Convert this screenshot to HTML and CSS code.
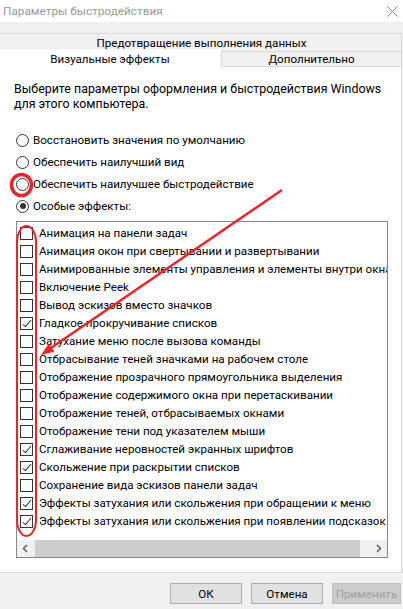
FILE: index.html
```html
<!DOCTYPE html>
<html lang="ru">
<head>
    <meta charset="UTF-8">
    <meta name="viewport" content="width=device-width, initial-scale=1.0">
    <title>Параметры быстродействия</title>
    <link rel="stylesheet" href="styles.css">
</head>
<body>
    <div class="window">
        <div class="titlebar">
            <span class="title">Параметры быстродействия</span>
            <svg class="close" width="11" height="11" viewBox="0 0 11 11">
                <path d="M0.5 0.5 L10.5 10.5 M10.5 0.5 L0.5 10.5" stroke="#8a8a8a" stroke-width="1" fill="none"/>
            </svg>
        </div>
        <div class="tabs">
            <div class="tab-back">Предотвращение выполнения данных</div>
            <div class="tab-front">
                <div class="tab active">Визуальные эффекты</div>
                <div class="tab">Дополнительно</div>
            </div>
        </div>
        <div class="panel">
            <p class="desc">Выберите параметры оформления и быстродействия Windows для этого компьютера.</p>
            <div class="radios">
                <label class="radio"><span class="dot"></span>Восстановить значения по умолчанию</label>
                <label class="radio"><span class="dot"></span>Обеспечить наилучший вид</label>
                <label class="radio"><span class="dot"></span>Обеспечить наилучшее быстродействие</label>
                <label class="radio checked"><span class="dot"></span>Особые эффекты:</label>
            </div>
            <div class="listbox">
                <ul class="effects">
                    <li><span class="box"></span>Анимация на панели задач</li>
                    <li><span class="box"></span>Анимация окон при свертывании и развертывании</li>
                    <li><span class="box"></span>Анимированные элементы управления и элементы внутри окна</li>
                    <li><span class="box"></span>Включение Peek</li>
                    <li><span class="box"></span>Вывод эскизов вместо значков</li>
                    <li class="on"><span class="box"></span>Гладкое прокручивание списков</li>
                    <li><span class="box"></span>Затухание меню после вызова команды</li>
                    <li><span class="box"></span>Отбрасывание теней значками на рабочем столе</li>
                    <li><span class="box"></span>Отображение прозрачного прямоугольника выделения</li>
                    <li><span class="box"></span>Отображение содержимого окна при перетаскивании</li>
                    <li><span class="box"></span>Отображение теней, отбрасываемых окнами</li>
                    <li><span class="box"></span>Отображение тени под указателем мыши</li>
                    <li class="on"><span class="box"></span>Сглаживание неровностей экранных шрифтов</li>
                    <li class="on"><span class="box"></span>Скольжение при раскрытии списков</li>
                    <li><span class="box"></span>Сохранение вида эскизов панели задач</li>
                    <li class="on"><span class="box"></span>Эффекты затухания или скольжения при обращении к меню</li>
                    <li class="on"><span class="box"></span>Эффекты затухания или скольжения при появлении подсказок</li>
                </ul>
                <div class="hscroll">
                    <span class="arrow">
                        <svg width="7" height="9" viewBox="0 0 7 9"><path d="M5 1 L1.5 4.5 L5 8" stroke="#606060" stroke-width="1.5" fill="none"/></svg>
                    </span>
                    <span class="thumb"></span>
                    <span class="arrow">
                        <svg width="7" height="9" viewBox="0 0 7 9"><path d="M2 1 L5.5 4.5 L2 8" stroke="#606060" stroke-width="1.5" fill="none"/></svg>
                    </span>
                </div>
            </div>
        </div>
        <div class="buttons">
            <button>ОК</button>
            <button>Отмена</button>
            <button disabled>Применить</button>
        </div>

        <!-- red marks drawn over the screenshot -->
        <svg class="marks" width="403" height="609" viewBox="0 0 403 609">
            <ellipse cx="21.5" cy="185" rx="10" ry="10.5" stroke="#e5262d" stroke-width="3.5" fill="none"/>
            <rect x="17" y="226" width="19" height="310" rx="9.5" ry="16" stroke="#e5262d" stroke-width="2" fill="none"/>
            <line x1="282" y1="190" x2="51" y2="348" stroke="#e5262d" stroke-width="2.5"/>
            <polygon points="41,355 54.5,351.8 48.9,343.6" fill="#e5262d"/>
        </svg>
    </div>
</body>
</html>
```

FILE: styles.css
```css
/* Common styles */
body {
    margin: 0;
    padding: 0;
    background-color: #f0f0f0;
    font-family: Roboto, "Noto Sans", sans-serif;
    font-size: 11.6px;
    color: #000000;
}
.window {
    position: relative;
    width: 403px;
    height: 609px;
    overflow: hidden;
}
.titlebar {
    height: 22px;
    background-color: #ffffff;
    display: flex;
    justify-content: space-between;
    align-items: center;
    padding: 0 3px 0 3px;
}
.title {
    color: #999999;
    font-size: 11.8px;
}
.close {
    margin-right: 2px;
}

/* Tabs */
.tabs {
    padding-top: 11px;
    width: 402px;
}
.tab-back {
    height: 17px;
    line-height: 18px;
    border-top: 1px solid #d9d9d9;
    border-right: 1px solid #d9d9d9;
    text-align: center;
    padding-left: 2px;
}
.tab-front {
    display: flex;
    height: 16px;
}
.tab {
    flex: 1;
    text-align: center;
    line-height: 14px;
    background-color: #f0f0f0;
    border: 1px solid #d9d9d9;
}
.tab.active {
    flex: none;
    width: 220px;
    background-color: #ffffff;
    border: none;
    line-height: 20px;
    margin-top: -2px;
    height: 18px;
    padding-right: 1px;
}

/* Panel */
.panel {
    background-color: #ffffff;
    border-right: 1px solid #d9d9d9;
    border-bottom: 1px solid #d9d9d9;
    box-sizing: border-box;
    width: 402px;
    height: 506px;
}
.desc {
    margin: 0;
    padding: 14px 2px 0 14px;
    font-size: 12.4px;
    line-height: 15px;
}
.radios {
    margin-top: 18px;
    padding-left: 16px;
}
.radio {
    display: flex;
    align-items: center;
    height: 22px;
}
.dot {
    width: 11px;
    height: 11px;
    border: 1px solid #333333;
    border-radius: 50%;
    margin-right: 4px;
    position: relative;
    box-sizing: content-box;
}
.radio.checked .dot::after {
    content: '';
    position: absolute;
    left: 2.5px;
    top: 2.5px;
    width: 6px;
    height: 6px;
    border-radius: 50%;
    background-color: #333333;
}

/* Effects list */
.listbox {
    margin: 4px 0 0 16px;
    width: 372px;
    height: 337px;
    border: 1px solid #828790;
    box-sizing: border-box;
    display: flex;
    flex-direction: column;
    overflow: hidden;
}
.effects {
    list-style-type: none;
    margin: 0;
    padding: 2px 0 0 0;
    flex: 1;
}
.effects li {
    display: flex;
    align-items: center;
    height: 18px;
    white-space: nowrap;
    padding-left: 3px;
}
.box {
    flex: none;
    width: 11px;
    height: 11px;
    border: 1px solid #333333;
    margin-right: 6px;
    position: relative;
}
.effects li.on .box::after {
    content: '';
    position: absolute;
    left: 3.5px;
    top: 0px;
    width: 3px;
    height: 8px;
    border-right: 1px solid #333333;
    border-bottom: 1px solid #333333;
    transform: rotate(40deg);
}
.hscroll {
    flex: none;
    height: 17px;
    background-color: #f0f0f0;
    display: flex;
    align-items: center;
}
.arrow {
    width: 17px;
    height: 17px;
    display: flex;
    align-items: center;
    justify-content: center;
}
.thumb {
    height: 17px;
    width: 325px;
    margin-left: 1px;
    background-color: #cdcdcd;
}
.hscroll .arrow:last-child {
    margin-left: auto;
}

/* Dialog buttons */
.buttons {
    display: flex;
    justify-content: flex-end;
    gap: 9px;
    padding: 10px 2px 0 0;
}
.buttons button {
    width: 72px;
    height: 21px;
    background-color: #e1e1e1;
    border: 1px solid #adadad;
    font-family: Roboto, "Noto Sans", sans-serif;
    font-size: 11.6px;
    color: #000000;
    padding: 0;
}
.buttons button:disabled {
    width: 69px;
    background-color: #cccccc;
    border-color: #bfbfbf;
    color: #a0a0a0;
}
.marks {
    position: absolute;
    top: 0;
    left: 0;
    pointer-events: none;
}
```
